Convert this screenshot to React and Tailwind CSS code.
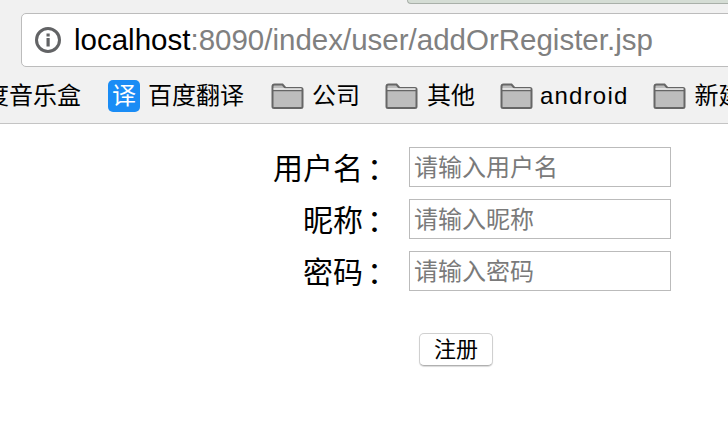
import React from 'react'

const FONT = "font-['Liberation_Sans','Noto_Sans_CJK_SC',sans-serif]"

function InfoIcon() {
  return (
    <svg width="28" height="28" viewBox="0 0 28 28" className="shrink-0">
      <circle cx="14" cy="14" r="11.5" fill="none" stroke="#626365" strokeWidth="3" />
      <rect x="12.5" y="12" width="3.2" height="8.5" fill="#626365" />
      <rect x="12.5" y="7.5" width="3.2" height="3" fill="#626365" />
    </svg>
  )
}

function FolderIcon() {
  return (
    <svg width="33" height="26" viewBox="0 0 33 26" className="shrink-0">
      <path
        d="M1.5 23.5V3.5Q1.5 1.5 3.5 1.5H11.5L14.5 5H30Q31.5 5 31.5 6.5V23.5Q31.5 25 30 25H3Q1.5 25 1.5 23.5Z"
        fill="#bdbdbd"
        stroke="#666666"
        strokeWidth="2"
      />
      <path d="M1.5 7.5H31.5" stroke="#666666" strokeWidth="1.5" />
      <path d="M2.5 6H30.5" stroke="#f1f1f1" strokeWidth="1.5" />
    </svg>
  )
}

function Bookmark({ label, className = '', labelClass = '' }) {
  return (
    <div className={`flex items-center gap-[8px] shrink-0 ${className}`}>
      <FolderIcon />
      <span className={labelClass}>{label}</span>
    </div>
  )
}

function Field({ label, placeholder }) {
  return (
    <div className="flex items-center h-10">
      <label className="w-[381px] text-right text-[30px] leading-[44px] h-10 text-black">
        {label}<span className="ml-[4px] mr-[-16px]">：</span>
      </label>
      <input
        className="ml-[28px] w-[262px] h-10 border border-[#bbbbbb] pl-[4px] pt-[2px] text-[24px] outline-none placeholder:text-[#7a7a7a]"
        placeholder={placeholder}
      />
    </div>
  )
}

export default function App() {
  return (
    <div className={`w-[728px] h-[448px] overflow-hidden bg-white ${FONT}`}>
      {/* browser chrome */}
      <div className="h-[124px] bg-[#f1f1f1] border-b border-[#c4c4c4] overflow-hidden">
        <div className="ml-[407px] h-[4px] bg-[#d5ddd5] border-b border-l border-[#a9b0a9] rounded-bl-[4px]" />
        <div className="mt-[9px] ml-[21px] w-[760px] h-[54px] bg-white border border-[#bcbcbc] rounded-[5px] flex items-center pl-[12px]">
          <InfoIcon />
          <div className="ml-[12px] text-[29.5px] leading-none whitespace-nowrap text-[#808080]">
            <span className="text-black">localhost</span>:8090/index/user/addOrRegister.jsp
          </div>
        </div>
        <div className="mt-[9px] ml-[-15px] h-10 flex items-center text-[24px] text-black whitespace-nowrap">
          <span className="shrink-0">度音乐盒</span>
          <div className="ml-[27px] flex items-center gap-[8px] shrink-0">
            <div className="w-8 h-8 rounded-[5px] bg-[#1a8cf5] text-white flex items-center justify-center text-[24px] leading-none">译</div>
            <span>百度翻译</span>
          </div>
          <Bookmark label="公司" className="ml-[27px]" />
          <Bookmark label="其他" labelClass="ml-[1px]" className="ml-[25px]" />
          <Bookmark label="android" labelClass="tracking-[1.2px] ml-[-1px]" className="ml-[25px]" />
          <Bookmark label="新建" className="ml-[25px]" />
        </div>
      </div>

      {/* register form */}
      <form className="pt-[23px] flex flex-col gap-3">
        <Field label="用户名" placeholder="请输入用户名" />
        <Field label="昵称" placeholder="请输入昵称" />
        <Field label="密码" placeholder="请输入密码" />
        <button
          type="button"
          className="mt-[30px] ml-[419px] w-[74px] h-[33px] bg-white border border-[#d0d0d0] border-b-[#b0b0b0] rounded-[5px] shadow-[0_1px_1px_rgba(0,0,0,0.15)] text-[22px] leading-none text-black"
        >
          注册
        </button>
      </form>
    </div>
  )
}
